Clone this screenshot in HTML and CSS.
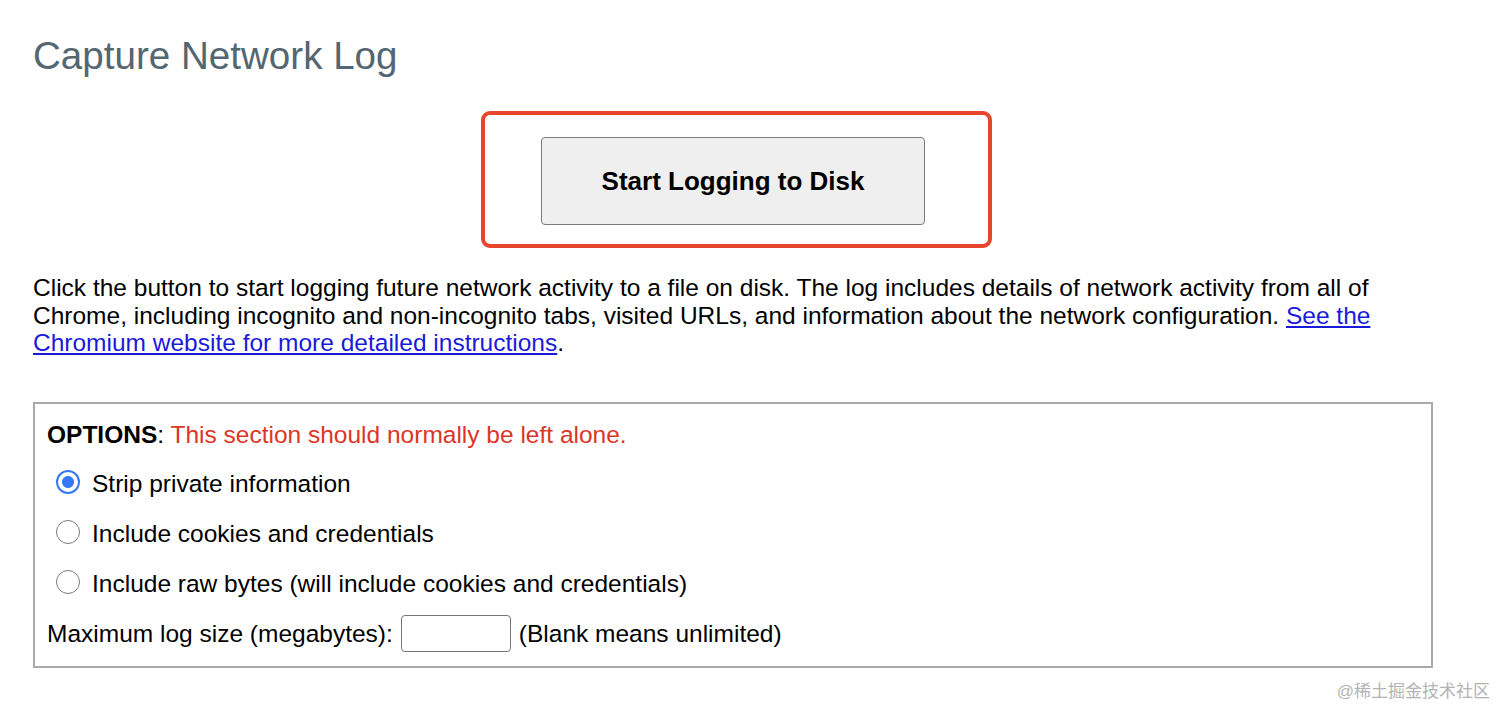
FILE: index.html
```html
<!DOCTYPE html>
<html lang="en">
<head>
<meta charset="utf-8">
<title>Capture Network Log</title>
<link rel="stylesheet" href="styles.css">
</head>
<body>
<main class="page">
  <h1 class="title">Capture Network Log</h1>
  <div class="highlight">
    <button class="start-btn" type="button">Start Logging to Disk</button>
  </div>
  <p class="intro">Click the button to start logging future network activity to a file on disk. The log includes details of network activity from all of Chrome, including incognito and non-incognito tabs, visited URLs, and information about the network configuration. <a href="#" class="link">See the Chromium website for more detailed instructions</a>.</p>
  <section class="options">
    <div class="options-head"><b>OPTIONS</b>: <span class="warn">This section should normally be left alone.</span></div>
    <label class="row"><input class="radio" type="radio" name="mode" checked><span>Strip private information</span></label>
    <label class="row"><input class="radio" type="radio" name="mode"><span>Include cookies and credentials</span></label>
    <label class="row"><input class="radio" type="radio" name="mode"><span>Include raw bytes (will include cookies and credentials)</span></label>
    <div class="row size-row"><span>Maximum log size (megabytes):</span><input class="size-input" type="text"><span>(Blank means unlimited)</span></div>
  </section>
</main>
<div class="watermark">@稀土掘金技术社区</div>
</body>
</html>
```
FILE: styles.css
```css
html, body {
  margin: 0;
  padding: 0;
  background: #ffffff;
}
body {
  font-family: "Liberation Sans", Arial, "Noto Sans CJK SC", sans-serif;
  color: #000;
  position: relative;
  width: 1512px;
  height: 726px;
  overflow: hidden;
}
.page {
  padding: 34px 0 0 33px;
  width: 1400px;
}
.title {
  margin: 0;
  font-size: 38.6px;
  line-height: 44px;
  font-weight: normal;
  color: #536671;
}
.highlight {
  margin: 33px 0 0 448px;
  width: 384px;
  padding: 22px 63px 19px 56px;
  border: 4px solid #e8452f;
  border-radius: 9px;
}
.start-btn {
  display: block;
  width: 384px;
  height: 88px;
  margin: 0;
  padding: 0;
  background: #efefef;
  border: 1px solid #7c7c7c;
  border-radius: 4px;
  font-family: "Liberation Sans", Arial, sans-serif;
  font-size: 26px;
  font-weight: bold;
  color: #000;
}
.intro {
  margin: 26px 0 0 0;
  font-size: 24.5px;
  line-height: 27.5px;
}
.link {
  color: #1a1adb;
  text-decoration: underline;
}
.options {
  margin-top: 45px;
  border: 2px solid #a9a9a9;
  padding: 16px 12px 7px 12px;
  font-size: 24.5px;
}
.options-head {
  line-height: 30px;
  margin-bottom: 9px;
}
.warn {
  color: #dc3626;
}
.row {
  display: flex;
  align-items: center;
  height: 50px;
}
.radio {
  appearance: none;
  -webkit-appearance: none;
  box-sizing: border-box;
  width: 24px;
  height: 24px;
  margin: 0 12px 0 9px;
  border: 1.5px solid #7a7a7a;
  border-radius: 50%;
  background: #fff;
  position: relative;
  top: -2px;
}
.radio:checked {
  border: 2px solid #3478f6;
  background: radial-gradient(circle, #3478f6 0 5.5px, #fff 6.5px);
}
.size-row {
  gap: 8px;
}
.size-input {
  box-sizing: border-box;
  width: 110px;
  height: 37px;
  margin: 0;
  border: 1px solid #767676;
  border-radius: 4px;
  background: #fff;
}
.watermark {
  position: absolute;
  right: 22px;
  top: 680px;
  font-size: 17px;
  line-height: 24px;
  color: #b3b3b3;
}
```
